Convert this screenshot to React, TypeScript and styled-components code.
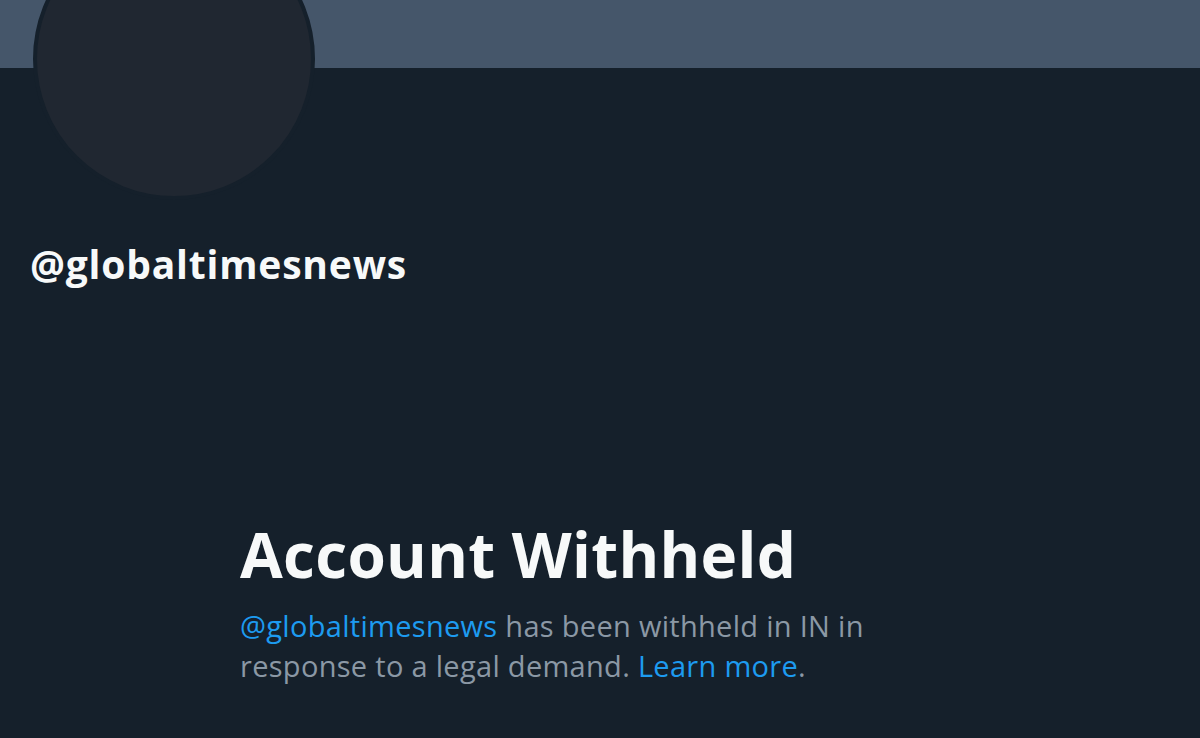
import React from "react";
import styled, { createGlobalStyle } from "styled-components";

const GlobalStyle = createGlobalStyle`
  html, body {
    margin: 0;
    padding: 0;
    background: #15202b;
  }
  body {
    font-family: "Open Sans", "Liberation Sans", Arial, sans-serif;
  }
`;

const Page = styled.div`
  width: 1200px;
  height: 738px;
  overflow: hidden;
  background: #15202b;
`;

const Banner = styled.div`
  height: 68px;
  background: #45566a;
`;

const Header = styled.div`
  padding-left: 33px;
`;

const Avatar = styled.div`
  width: 274px;
  height: 274px;
  margin-top: -150px;
  border: 4px solid #15202b;
  border-radius: 50%;
  background: #202731;
  position: relative;
`;

const Handle = styled.h2`
  margin: 40px 0 0 -3px;
  font-size: 39px;
  line-height: 48px;
  font-weight: 700;
  letter-spacing: 0.8px;
  color: #f7f9f9;
`;

const Empty = styled.section`
  padding-left: 240px;
  margin-top: 228px;
`;

const Title = styled.h1`
  margin: 0;
  font-size: 62px;
  line-height: 76px;
  font-weight: 700;
  color: #f7f9f9;
  letter-spacing: 0.3px;
`;

const Text = styled.p`
  margin: 14px 0 0;
  max-width: 660px;
  font-size: 29px;
  line-height: 40px;
  letter-spacing: 0.3px;
  color: #8b98a5;
`;

const Link = styled.a`
  color: #1d9bf0;
  text-decoration: none;
`;

export default function App() {
  return (
    <Page>
      <GlobalStyle />
      <Banner />
      <Header>
        <Avatar />
        <Handle>@globaltimesnews</Handle>
      </Header>
      <Empty>
        <Title>Account Withheld</Title>
        <Text>
          <Link>@globaltimesnews</Link> has been withheld in IN in response to
          a legal demand. <Link>Learn more</Link>.
        </Text>
      </Empty>
    </Page>
  );
}
